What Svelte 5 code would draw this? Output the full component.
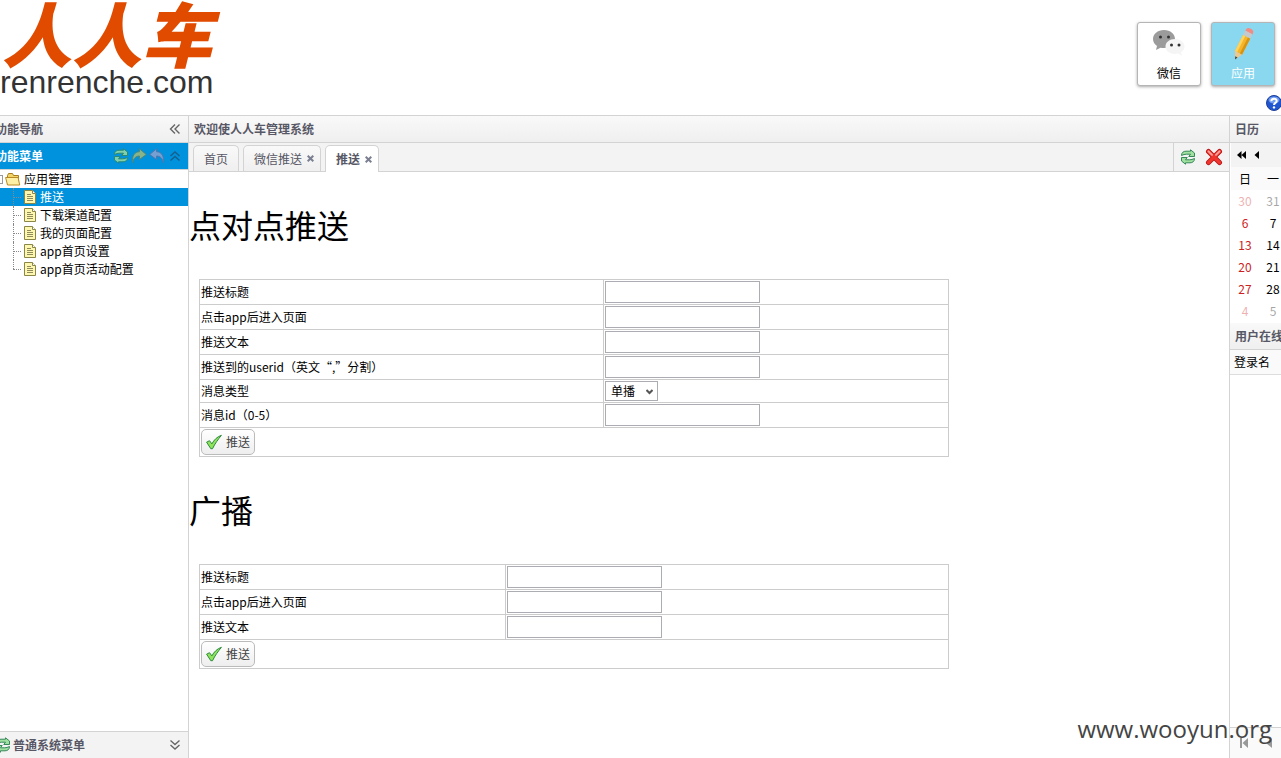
<script>
  let selected = $state("推送");
  let messageType = $state("单播");

  const pages = ["推送", "下载渠道配置", "我的页面配置", "app首页设置", "app首页活动配置"];

  const tabs = [
    { title: "首页", closable: false },
    { title: "微信推送", closable: true },
    { title: "推送", closable: true, active: true },
  ];

  const weeks = [
    { days: [30, 31], other: true },
    { days: [6, 7] },
    { days: [13, 14] },
    { days: [20, 21] },
    { days: [27, 28] },
    { days: [4, 5], other: true },
  ];

  const forms = [
    {
      id: "single",
      title: "点对点推送",
      fields: [
        { name: "title", label: "推送标题" },
        { name: "page", label: "点击app后进入页面" },
        { name: "text", label: "推送文本" },
        { name: "userid", label: "推送到的userid（英文“,”分割）" },
        { name: "type", label: "消息类型", select: true },
        { name: "msgid", label: "消息id（0-5）" },
      ],
    },
    {
      id: "broadcast",
      title: "广播",
      fields: [
        { name: "title", label: "推送标题" },
        { name: "page", label: "点击app后进入页面" },
        { name: "text", label: "推送文本" },
      ],
    },
  ];
</script>

{#snippet refresh()}
  <svg width="16" height="16" viewBox="0 0 16 16">
    <g fill="#9fe09f" stroke="#37875a" stroke-width="1" stroke-linejoin="round">
      <path d="M1.500 6.500C1.500 3.500 3.500 2.200 6 2.200h4.500V.8L14.500 4v3.500H8.800l1.700-2.300H6.500C4.500 5.200 3.500 5.600 1.500 6.500z" />
      <path d="M14.500 9.500c0 3-2 4.300-4.500 4.300H5.500v1.400L1.500 12V8.500h5.700l-1.700 2.300h4c2 0 3-.4 5-1.300z" />
    </g>
  </svg>
{/snippet}

{#snippet chevrons(dir)}
  <svg width="16" height="16" viewBox="0 0 16 16" fill="none" stroke-width="1.400">
    {#if dir === "left"}
      <path stroke="#666" d="M8 3.500L3.500 8L8 12.500M12.500 3.500L8 8L12.500 12.500" />
    {:else if dir === "up"}
      <path stroke="#1c5478" d="M3.500 8L8 4L12.500 8M3.500 12.500L8 8.500L12.500 12.500" />
    {:else}
      <path stroke="#666" d="M3.500 3.500L8 7.500L12.500 3.500M3.500 8L8 12L12.500 8" />
    {/if}
  </svg>
{/snippet}

<div class="page">
  <header>
    <a class="logo" href="/">
      <span class="brand">人人车</span>
      <span class="domain">renrenche.com</span>
    </a>
    <div class="right">
      <div class="apps">
        <button class="app">
          <svg width="36" height="36" viewBox="0 0 36 36">
            <path fill="#9b9b9b" d="M13 4C6.500 4 2 8 2 13c0 3 1.500 5.200 4 7l-1 4 4.500-2.300c1.200.3 2.300.4 3.500.4 6.500 0 11-4 11-9S19.500 4 13 4z" />
            <path fill="#f5f5f5" d="M24 13c-5.500 0-9.500 3.200-9.500 7.500s4 7.500 9.500 7.500c1 0 2-.1 3-.4l4 2.200-1-3.500c2.200-1.500 3.500-3.400 3.500-5.800 0-4.300-4-7.500-9.500-7.500z" />
            <g fill="#333">
              <circle cx="9.500" cy="11" r="1.500" /><circle cx="17.500" cy="11" r="1.500" />
              <circle cx="20.500" cy="19" r="1.500" /><circle cx="28" cy="19" r="1.500" />
            </g>
          </svg>
          <span>微信</span>
        </button>
        <button class="app on">
          <svg width="36" height="36" viewBox="0 0 36 36">
            <g transform="rotate(27 18 18)">
              <path fill="#f28b82" d="M14 5.500V4q0-3 4-3t4 3v1.500z" />
              <path fill="#c5c9cc" d="M14 5h8v5h-8z" />
              <path fill="#f4b52a" d="M14 10h8v18h-8z" />
              <path fill="#d99412" d="M19.500 10H22v18h-2.500z" />
              <path fill="#ffd35c" d="M14 10h2.500v18H14z" />
              <path fill="#ecc88f" d="M14 28h8l-4 7z" />
              <path fill="#444" d="M16.700 32.500h2.600L18 35.500z" />
            </g>
          </svg>
          <span>应用</span>
        </button>
      </div>
      <button class="help" aria-label="帮助">
        <svg width="16" height="16" viewBox="0 0 16 16">
          <circle cx="8" cy="8" r="7.500" fill="#1f55cf" stroke="#1c3f9c" />
          <ellipse cx="8" cy="5" rx="5.500" ry="3.500" fill="#6f9cf0" />
          <path fill="none" stroke="#fff" stroke-width="2" d="M5.300 6.200C5.300 2.700 10.800 2.900 10.700 6 10.600 8 8 7.800 8 10" />
          <circle cx="8" cy="12.400" r="1.200" fill="#fff" />
        </svg>
      </button>
    </div>
  </header>

  <div class="layout">
    <nav class="west">
      <div class="bar">
        <span>功能导航</span>
        <button class="tool" aria-label="收起">{@render chevrons("left")}</button>
      </div>
      <div class="bar active">
        <span>功能菜单</span>
        <div class="tools">
          <button class="tool" aria-label="刷新">{@render refresh()}</button>
          <button class="tool" aria-label="展开">
            <svg width="16" height="16" viewBox="0 0 16 16">
              <path fill="#a9bd78" stroke="#5f8568" d="M1.500 15C.8 8 3.500 3.700 8.500 3.700V.8l6.800 5.700-6.800 5V8C5 8 2.500 10 1.500 15z" />
            </svg>
          </button>
          <button class="tool" aria-label="折叠">
            <svg width="16" height="16" viewBox="0 0 16 16">
              <path fill="#93a4cf" stroke="#6272a5" d="M14.500 15c.7-7-2-11.300-7-11.300V.8L.7 6.500l6.800 5V8c3.500 0 6 2 7 7z" />
            </svg>
          </button>
          <button class="tool" aria-label="收起菜单">{@render chevrons("up")}</button>
        </div>
      </div>

      <div class="tree">
        <div class="folder">
          <i></i>
          <svg width="16" height="16" viewBox="0 0 16 16">
            <path fill="#f3d467" stroke="#a87c1e" d="M2.500 13.500v-9l1-2h4l1 2h5v9z" />
            <path fill="#fff0a5" stroke="#b98a22" d="M.6 6.500h12.500l1.600 7.500H2.500z" />
          </svg>
          <span>应用管理</span>
        </div>
        <ul>
          {#each pages as page}
            <li class:selected={selected === page}>
              <a href="#page" onclick={() => (selected = page)}>
                <svg width="16" height="16" viewBox="0 0 16 16">
                  <path fill="#fdf7b0" stroke="#8a8648" d="M2.500 1.500h8l3 3v10h-11z" />
                  <path fill="#fff" stroke="#8a8648" d="M10.500 1.500v3h3" />
                  <path stroke="#8f8b5c" d="M5 5.500h4M5 7.500h6M5 9.500h6M5 11.500h6" />
                </svg>
                <span>{page}</span>
              </a>
            </li>
          {/each}
        </ul>
      </div>

      <div class="bar bottom">
        <div class="label">{@render refresh()}<span>普通系统菜单</span></div>
        <button class="tool" aria-label="展开菜单">{@render chevrons("down")}</button>
      </div>
    </nav>

    <main>
      <div class="bar">欢迎使人人车管理系统</div>
      <div class="tabbar">
        <div class="tabs">
          {#each tabs as tab}
            <div class="tab" class:current={tab.active}>
              <a href="#tab">{tab.title}</a>
              {#if tab.closable}
                <button class="close" aria-label="关闭">
                  <svg width="7" height="7" viewBox="0 0 7 7">
                    <path stroke="#7a7f91" stroke-width="2" d="M.7 .7l5.600 5.600M6.300 .7L.7 6.300" />
                  </svg>
                </button>
              {/if}
            </div>
          {/each}
        </div>
        <div class="tabtools">
          <button class="tool" aria-label="刷新标签">{@render refresh()}</button>
          <button class="tool" aria-label="关闭标签">
            <svg width="18" height="18" viewBox="0 0 18 18" stroke-linecap="round">
              <path stroke="#b81414" stroke-width="5" d="M3.500 3.500l11 11M14.500 3.500l-11 11" />
              <path stroke="#f0352f" stroke-width="3.400" d="M3.500 3.500l11 11M14.500 3.500l-11 11" />
              <path stroke="#ffa19b" stroke-width="2" d="M3.500 3.400l3.500 3.500M14.500 3.400l-3.500 3.500" />
            </svg>
          </button>
        </div>
      </div>

      <div class="content">
        {#each forms as form}
          <h1>{form.title}</h1>
          <table class="form {form.id}">
            <tbody>
              {#each form.fields as field}
                <tr>
                  <td class="name"><label for="{form.id}-{field.name}">{field.label}</label></td>
                  <td>
                    {#if field.select}
                      <div class="select">
                        <select id="{form.id}-{field.name}" bind:value={messageType}>
                          <option>单播</option>
                        </select>
                        <svg width="7" height="6" viewBox="0 0 7 6">
                          <path fill="none" stroke="#555" stroke-width="2" d="M.5 1l3 3 3-3" />
                        </svg>
                      </div>
                    {:else}
                      <input type="text" id="{form.id}-{field.name}" />
                    {/if}
                  </td>
                </tr>
              {/each}
              <tr>
                <td colspan="2">
                  <button class="submit">
                    <svg width="16" height="16" viewBox="0 0 16 16">
                      <path fill="#8fe45c" stroke="#2c8a3c" stroke-linejoin="round" d="M.6 8.200l2.900-1.500 2.400 3.200C8 6 11 2.800 15.400 1.300 12 5.500 9 9.500 6.500 14.700H4.800z" />
                    </svg>
                    <span>推送</span>
                  </button>
                </td>
              </tr>
            </tbody>
          </table>
        {/each}
      </div>
    </main>

    <aside>
      <div class="bar">日历</div>
      <div class="month">
        <button class="tool" aria-label="上一年">
          <svg width="9" height="8" viewBox="0 0 9 8"><path d="M4.500 0v8L0 4zM9 0v8L4.500 4z" /></svg>
        </button>
        <button class="tool" aria-label="上一月">
          <svg width="9" height="8" viewBox="0 0 9 8"><path d="M6 0v8L1.500 4z" /></svg>
        </button>
      </div>
      <table class="calendar">
        <thead>
          <tr><th>日</th><th>一</th></tr>
        </thead>
        <tbody>
          {#each weeks as week}
            <tr class:other={week.other}>
              {#each week.days as day}
                <td>{day}</td>
              {/each}
            </tr>
          {/each}
        </tbody>
      </table>
      <div class="bar users">用户在线</div>
      <div class="column">登录名</div>
      <div class="pager">
        <button class="tool" aria-label="第一页">
          <svg width="10" height="10" viewBox="0 0 10 10" fill="#999"><path d="M1 0h2v10H1zM9 0v10L3.500 5z" /></svg>
        </button>
        <button class="tool" aria-label="上一页">
          <svg width="10" height="10" viewBox="0 0 10 10" fill="#999"><path d="M8 0v10L2 5z" /></svg>
        </button>
      </div>
    </aside>
  </div>

  <div class="watermark">www.wooyun.org</div>
</div>

<style>
  :global(body) {
    overflow: hidden;
    background: #fff;
    font: 12px/18px "Noto Sans CJK SC", "Open Sans", sans-serif;
    color: #000;
  }
  button,
  input,
  select {
    font: inherit;
    box-sizing: border-box;
    margin: 0;
    padding: 0;
  }
  button {
    border: 0;
    background: none;
    cursor: pointer;
  }
  svg {
    display: block;
    flex: none;
  }
  a {
    color: inherit;
    text-decoration: none;
  }
  .page {
    position: relative;
    display: flex;
    flex-direction: column;
    height: 100vh;
    overflow: hidden;
  }
  header {
    display: flex;
    justify-content: space-between;
    height: 115px;
  }
  .logo {
    display: flex;
    flex-direction: column;
    white-space: nowrap;
  }
  .brand {
    padding-left: 2px;
    font-size: 70px;
    line-height: 64px;
    font-weight: 900;
    font-style: italic;
    color: #e14b00;
  }
  .domain {
    font: 32px/36px "Liberation Sans", Arial, sans-serif;
    color: #333;
  }
  .right {
    display: flex;
    flex-direction: column;
    align-items: flex-end;
  }
  .apps {
    display: flex;
    gap: 10px;
    padding: 22px 6px 9px 0;
  }
  .app {
    display: flex;
    flex-direction: column;
    align-items: center;
    width: 64px;
    height: 64px;
    padding-top: 3px;
    border: 1px solid #b5b5b5;
    border-radius: 3px;
    background: #fff;
    box-shadow: 0 1px 3px #aaa;
  }
  .app span {
    margin-top: 2px;
  }
  .app.on {
    background: #8ad8f0;
    color: #fff;
  }
  .help {
    margin-right: -1px;
  }

  .layout {
    flex: 1;
    display: grid;
    grid-template-columns: 188px 1fr 51px;
    min-height: 0;
    border-top: 1px solid #d3d3d3;
  }
  .bar {
    display: flex;
    align-items: center;
    justify-content: space-between;
    box-sizing: border-box;
    height: 27px;
    padding: 0 5px;
    border-bottom: 1px solid #d3d3d3;
    background: linear-gradient(#f9f9f9, #efefef);
    font-weight: bold;
    color: #575765;
    white-space: nowrap;
  }
  .west,
  aside {
    display: flex;
    flex-direction: column;
    min-width: 0;
    overflow: hidden;
  }
  .west > * {
    margin-left: -10px;
  }
  .west .bar.active {
    background: #0092dc;
    color: #fff;
    border-color: #d3d3d3;
  }
  .tools {
    display: flex;
    gap: 2px;
  }
  .active .tools {
    opacity: 0.8;
  }
  .tree {
    flex: 1;
  }
  .folder {
    display: flex;
    align-items: center;
    gap: 2px;
    height: 18px;
    padding-left: 4px;
  }
  .folder i {
    box-sizing: border-box;
    width: 9px;
    height: 9px;
    border: 1px solid #999;
  }
  .folder svg {
    margin-right: 1px;
  }
  ul {
    margin: 0;
    padding: 0;
    list-style: none;
  }
  li {
    position: relative;
    height: 18px;
    padding-left: 32px;
  }
  li a {
    display: flex;
    align-items: center;
    gap: 2px;
  }
  li::before {
    content: "";
    position: absolute;
    left: 23px;
    top: 0;
    width: 8px;
    height: 18px;
    border-left: 1px dotted #888;
  }
  li:last-child::before {
    height: 9px;
  }
  li::after {
    content: "";
    position: absolute;
    left: 23px;
    top: 9px;
    width: 8px;
    border-top: 1px dotted #888;
  }
  li.selected {
    background: #0092dc;
    color: #fff;
  }
  .bar.bottom {
    border-top: 1px solid #d3d3d3;
    border-bottom: 0;
    background: #f3f3f3;
  }
  .label {
    display: flex;
    align-items: center;
    gap: 2px;
  }

  main {
    display: flex;
    flex-direction: column;
    min-width: 0;
    border-left: 1px solid #d3d3d3;
    border-right: 1px solid #d3d3d3;
  }
  .tabbar {
    display: flex;
    justify-content: space-between;
    box-sizing: border-box;
    height: 29px;
    border-bottom: 1px solid #d3d3d3;
    background: #f3f3f3;
  }
  .tabs {
    display: flex;
    gap: 4px;
    padding: 2px 0 0 4px;
  }
  .tab {
    display: flex;
    align-items: center;
    gap: 5px;
    box-sizing: border-box;
    height: 26px;
    padding: 0 10px;
    border: 1px solid #d3d3d3;
    border-bottom: 0;
    border-radius: 5px 5px 0 0;
    background: linear-gradient(#f9f9f9, #efefef);
    color: #575765;
  }
  .tab:has(.close) {
    padding-right: 6px;
  }
  .tab.current {
    height: 27px;
    background: #fff;
    font-weight: bold;
  }
  .tabtools {
    display: flex;
    align-items: center;
    gap: 9px;
    padding: 0 6px;
    border-left: 1px solid #d3d3d3;
  }
  .content {
    flex: 1;
    overflow: hidden;
  }
  h1 {
    margin: 28px 0 30px;
    font-size: 32px;
    line-height: 49px;
    font-weight: normal;
  }
  .form {
    width: 750px;
    margin-left: 10px;
    border-collapse: collapse;
    table-layout: fixed;
  }
  .form td {
    padding: 1px;
    border: 1px solid #ccc;
  }
  .single .name {
    width: 401px;
  }
  .broadcast .name {
    width: 303px;
  }
  input {
    display: block;
    width: 155px;
    height: 22px;
    border: 1px solid #abadb3;
  }
  .select {
    position: relative;
    width: 53px;
  }
  select {
    display: block;
    width: 100%;
    height: 20px;
    padding-left: 5px;
    border: 1px solid #abadb3;
    border-radius: 0;
    background: #fff;
    appearance: none;
  }
  .select svg {
    position: absolute;
    right: 5px;
    top: 8px;
    pointer-events: none;
  }
  .submit {
    display: flex;
    align-items: center;
    gap: 4px;
    height: 26px;
    padding: 0 4px;
    border: 1px solid #bbb;
    border-radius: 5px;
    background: linear-gradient(#fff, #eee);
    color: #444;
  }

  .month {
    display: flex;
    align-items: center;
    gap: 7px;
    height: 24px;
    margin-left: 1px;
    padding-left: 6px;
    background: #f3f3f3;
  }
  .calendar {
    width: 56px;
    margin-left: 1px;
    border-collapse: collapse;
    table-layout: fixed;
    text-align: center;
  }
  .calendar th {
    height: 23px;
    padding: 0;
    background: #fafafa;
    font-weight: normal;
  }
  .calendar td {
    height: 22px;
    padding: 0;
  }
  .calendar td:first-child {
    color: #cc2222;
  }
  .calendar .other {
    opacity: 0.35;
  }
  .users {
    margin-top: 1px;
  }
  .column {
    flex: 1;
    padding-left: 4px;
    line-height: 24px;
    background: linear-gradient(#fafafa 24px, #ddd 24px, #ddd 25px, #fff 25px);
    white-space: nowrap;
  }
  .pager {
    display: flex;
    align-items: center;
    gap: 15px;
    height: 30px;
    padding-left: 9px;
    border-top: 1px solid #d3d3d3;
    background: #fafafa;
  }
  .watermark {
    position: absolute;
    right: 9px;
    bottom: 12px;
    font: 24px/34px "Open Sans", sans-serif;
    color: #444;
  }
</style>
